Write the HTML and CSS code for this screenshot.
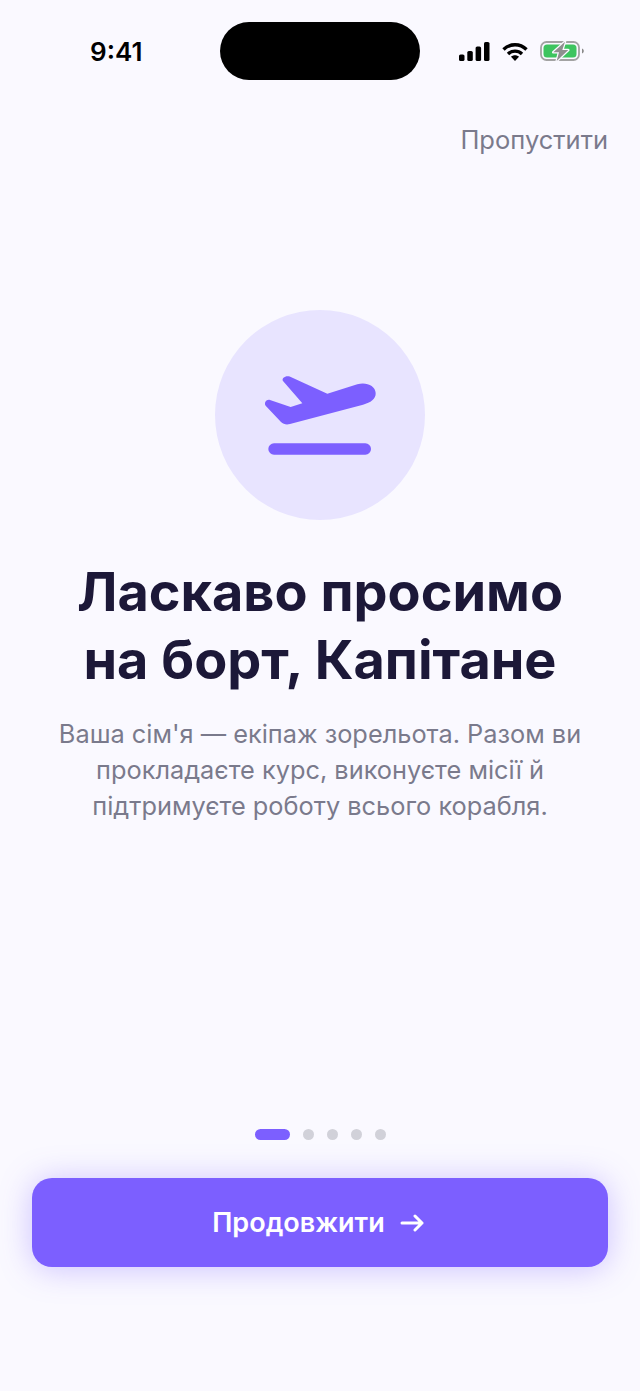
FILE: index.html
```html
<!DOCTYPE html>
<html lang="uk">
<head>
<meta charset="utf-8">
<title>Онбординг</title>
<link rel="stylesheet" href="styles.css">
</head>
<body>
<main class="screen">
  <header class="status">
    <span class="time">9:41</span>
    <div class="island"></div>
    <div class="status-icons">
      <svg class="signal" width="31" height="19" viewBox="0 0 31 19"><rect x="0" y="12.5" width="5.5" height="6.5" rx="1.6"/><rect x="8.3" y="9" width="5.5" height="10" rx="1.6"/><rect x="16.6" y="4.5" width="5.5" height="14.5" rx="1.6"/><rect x="25" y="0" width="5.5" height="19" rx="1.6"/></svg>
      <svg class="wifi" width="26" height="19" viewBox="0 0 26 19" fill="none" stroke="#000" stroke-width="3.4"><path d="M1.5 7.5C8 1.2 18 1.2 24.5 7.5"/><path d="M6 12c4-3.8 10-3.8 14 0"/><path d="M13 19l-4-4.2c2.2-2 5.8-2 8 0z" fill="#000" stroke="none"/></svg>
      <svg class="battery" width="44" height="20" viewBox="0 0 44 20"><rect x="1" y="1" width="38" height="18" rx="5.500" fill="none" stroke="#a3a3a3" stroke-width="1.800"/><rect x="3.500" y="3.500" width="33" height="13" rx="3.500" fill="#3dc45f"/><path d="M42 7.500c1.200.4 1.800 1.300 1.800 2.500s-.6 2.100-1.800 2.500z" fill="#8a8a8a"/><path class="bolt" d="M25 .7L13.300 11.300H19L16.700 20 28.300 9H22.300z"/></svg>
    </div>
  </header>

  <div class="skip-row"><a class="skip">Пропустити</a></div>

  <section class="hero">
    <div class="badge">
      <svg width="210" height="210" viewBox="45 30 630 630"><path class="plane" d="M249 243c-5-8 7-17 20-13.500L382 281l90-28c26-8 54 4 55 26 1 18-15 29-38 35L270 372c-10 3-20 1-27-6l-46-49c-6-8 2-20 13-17l62 21 35-11-58-67z"/><rect class="plane" x="205" y="430" width="308" height="34" rx="17"/></svg>
    </div>
    <h1 class="title">Ласкаво просимо<br>на борт, Капітане</h1>
    <p class="lead">Ваша сім'я — екіпаж зорельота. Разом ви<br>прокладаєте курс, виконуєте місії й<br>підтримуєте роботу всього корабля.</p>
  </section>

  <div class="dots">
    <span class="dot active"></span>
    <span class="dot"></span>
    <span class="dot"></span>
    <span class="dot"></span>
    <span class="dot"></span>
  </div>

  <button class="cta">
    <span>Продовжити</span>
    <svg width="24" height="24" viewBox="0 0 24 24" fill="none" stroke="#fff" stroke-width="3" stroke-linecap="round" stroke-linejoin="round"><path d="M2 12h20M15 5l7 7-7 7"/></svg>
  </button>
</main>
</body>
</html>
```
FILE: styles.css
```css
* { box-sizing: border-box; }
html, body { margin: 0; padding: 0; }
body { background: #faf9ff; font-family: Inter, "Noto Sans", sans-serif; }
.screen { width: 640px; height: 1391px; display: flex; flex-direction: column; padding: 0 32px; overflow: hidden; }

.status { height: 58px; margin-top: 22px; display: flex; align-items: center; justify-content: space-between; position: relative; }
.time { margin-left: 58px; font-size: 26px; font-weight: 600; color: #000; line-height: 1; padding-top: 1px; }
.island { position: absolute; left: 188px; top: 0; width: 200px; height: 58px; border-radius: 29px; background: #000; }
.status-icons { display: flex; align-items: center; margin-right: 24px; gap: 12px; }
.signal { fill: #000; }
.bolt { fill: #8f8f8f; stroke: #faf9ff; stroke-width: 2.5px; paint-order: stroke; stroke-linejoin: round; }

.skip-row { display: flex; justify-content: flex-end; margin-top: 44px; }
.skip { font-size: 25.5px; line-height: 32px; color: #7a7a8c; }

.hero { display: flex; flex-direction: column; align-items: center; margin-top: 154px; }
.badge { width: 210px; height: 210px; border-radius: 50%; background: #e8e4ff; display: flex; }
.plane { fill: #7c5fff; }
.title { margin: 38px 0 0; font-size: 54px; line-height: 68px; font-weight: 700; color: #1c1838; text-align: center; }
.lead { margin: 22px 0 0; font-size: 25.35px; line-height: 36px; color: #7a7a8c; text-align: center; }

.dots { margin-top: auto; display: flex; justify-content: center; align-items: center; gap: 13px; }
.dot { width: 11px; height: 11px; border-radius: 50%; background: #d1d1d9; }
.dot.active { width: 35px; border-radius: 6px; background: #7c5fff; }

.cta { margin: 38px 0 124px; padding: 0 4px 0 0; height: 89px; border: 0; border-radius: 20px; background: #7c5fff; color: #fff; font: 600 27px Inter, sans-serif; display: flex; align-items: center; justify-content: center; gap: 15px; box-shadow: 0 2px 32px rgba(124, 95, 255, .36); }
```
